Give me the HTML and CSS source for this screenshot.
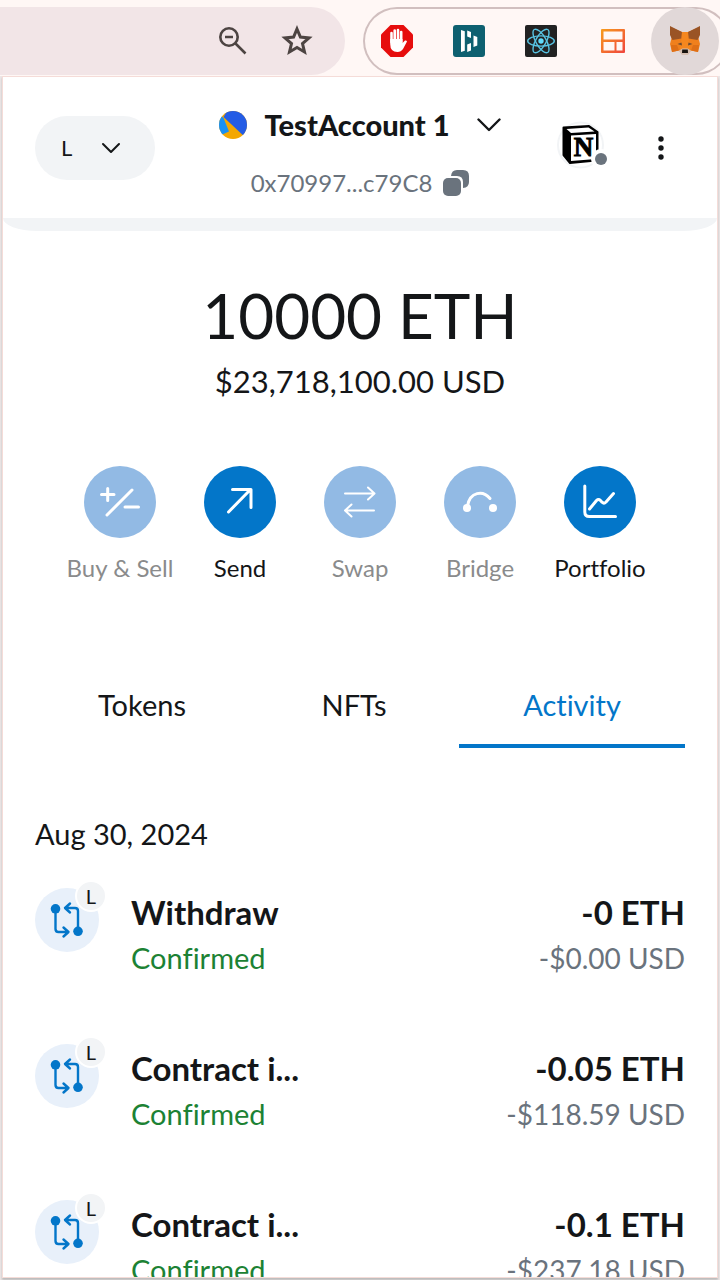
FILE: index.html
```html
<!DOCTYPE html>
<html lang="en">
<head>
<meta charset="utf-8">
<meta name="viewport" content="width=device-width, initial-scale=1">
<title>Wallet</title>
<link rel="stylesheet" href="styles.css">
</head>
<body>
<svg class="defs" aria-hidden="true">
  <symbol id="interaction" viewBox="0 0 64 64">
    <g fill="none" stroke="#0376c9" stroke-width="2.4" stroke-linecap="round" stroke-linejoin="round">
      <path d="M20.500 22V41Q20.500 44 23.500 44H33M28.500 39.500L33.500 44L28.500 48.500M43 42V23Q43 20 40 20H30.500M35 15.500L30 20L35 24.500"/>
    </g>
    <circle cx="20.500" cy="20.800" r="4.800" fill="#0376c9"/><circle cx="43" cy="43.300" r="4.800" fill="#0376c9"/>
  </symbol>
</svg>
<div class="toolbar">
  <div class="address-bar">
    <button class="bar-button" aria-label="Zoom">
      <svg width="32" height="32" viewBox="0 0 32 32" fill="none" stroke="#4d4442" stroke-width="2.600"><circle cx="12" cy="12" r="8.700"/><path d="M8 12H16M18.500 18.500L28.500 28.500"/></svg>
    </button>
    <button class="bar-button" aria-label="Bookmark">
      <svg width="32" height="32" viewBox="0 0 32 32" fill="none" stroke="#4d4442" stroke-width="3"><path d="M16 4L19.400 12.100L28 12.900L21.500 18.600L23.500 27L16 22.500L8.500 27L10.500 18.600L4 12.900L12.600 12.100Z"/></svg>
    </button>
  </div>
  <div class="extensions">
    <button class="extension" aria-label="Ad blocker">
      <svg width="32" height="32" viewBox="0 0 32 32"><path fill="#e60d0d" d="M9.500 0H22.500L32 9.500V22.500L22.500 32H9.500L0 22.500V9.500Z"/><g stroke="#fff" stroke-width="2.600" stroke-linecap="round"><path d="M10.500 17V8M13.700 15V5.500M17 15V5M20.200 17V7"/></g><path fill="#fff" d="M9.200 14H21.500V18L24 15.500Q25.500 15 26 16.500L22 24Q20 27 16.500 27Q9.200 27 9.200 19Z"/></svg>
    </button>
    <button class="extension" aria-label="Dashboard">
      <svg width="32" height="32" viewBox="0 0 32 32"><rect width="32" height="32" rx="3" fill="#0e6070"/><g fill="#fff"><path d="M8 5L11.800 6.200V25.800L8 27ZM14.200 5.500L18 7V13L14.200 11.500ZM14.200 19.500L18 18V25.500L14.200 27ZM20.500 10.500L24.300 12V20.500L20.500 22Z"/></g></svg>
    </button>
    <button class="extension" aria-label="React developer tools">
      <svg width="32" height="32" viewBox="0 0 32 32"><rect width="32" height="32" rx="2" fill="#222"/><circle cx="16" cy="16" r="2.700" fill="#61dafb"/><g fill="none" stroke="#58c4e3" stroke-width="1.400"><ellipse cx="16" cy="16" rx="13.300" ry="5.100"/><ellipse cx="16" cy="16" rx="13.300" ry="5.100" transform="rotate(60 16 16)"/><ellipse cx="16" cy="16" rx="13.300" ry="5.100" transform="rotate(120 16 16)"/></g></svg>
    </button>
    <button class="extension" aria-label="Layout">
      <svg width="24" height="24" viewBox="0 0 24 24"><defs><linearGradient id="warm" x1="0" y1="0" x2="1" y2="1"><stop stop-color="#f79c1c"/><stop offset="1" stop-color="#f0443e"/></linearGradient></defs><path fill="url(#warm)" fill-rule="evenodd" d="M1 0H23Q24 0 24 1V23Q24 24 23 24H1Q0 24 0 23V1Q0 0 1 0ZM2.500 2.500V10.500H21.500V2.500ZM2.500 13V21.500H13.500V13ZM15.500 13V21.500H21.500V13Z"/></svg>
    </button>
    <button class="extension extension-active" aria-label="Wallet extension">
      <svg width="32" height="32" viewBox="0 0 32 32"><path fill="#f0801d" d="M1 2L13 7H19L31 2L29.500 13L31 19L29 27L22 25.500L19 29H13L10 25.500L3 27L1 19L2.500 13Z"/><path fill="#9a5425" d="M1 1L13 7L12.500 13.500L3.500 15L1 10ZM31 1L19 7L19.500 13.500L28.500 15L31 10Z"/><path fill="#f5871f" d="M13 7H19L19.500 14L21 24H11L12.500 14Z"/><path fill="#6d4a31" d="M8.500 19L12.500 17.500L13 20.500ZM23.500 19L19.500 17.500L19 20.500Z"/><path fill="#d5bfb2" d="M10 25.500L13.500 23.500H18.500L22 25.500L19 30H13Z"/><path fill="#17130f" d="M13.200 24.500H18.800L19 28H13Z"/><path fill="#df6f16" d="M2 20H8L10 25.500L3 27ZM30 20H24L22 25.500L29 27Z"/></svg>
    </button>
  </div>
</div>
<main class="popup">
  <header class="header">
    <button class="network" aria-label="Network L"><span>L</span>
      <svg width="20" height="12" viewBox="0 0 20 12" fill="none" stroke="#141618" stroke-width="2" stroke-linecap="round" stroke-linejoin="round"><path d="M2 2L10 10L18 2"/></svg>
    </button>
    <div class="account">
      <button class="account-name">
        <svg width="28" height="28" viewBox="0 0 28 28"><defs><clipPath id="round"><circle cx="14" cy="14" r="14"/></clipPath></defs><g clip-path="url(#round)"><path fill="#f3a702" d="M0 0H28V28H0Z"/><path fill="#245ce5" d="M8 0H28V28L4.500 6Z"/><path fill="#1b91f2" d="M0 3L4.500 7L10 20.500L0 25Z"/></g></svg>
        <span>TestAccount 1</span>
        <svg width="24" height="16" viewBox="0 0 24 16" fill="none" stroke="#141618" stroke-width="2.400" stroke-linecap="round" stroke-linejoin="round"><path d="M1.500 2.500L12 13L22.500 2.500"/></svg>
      </button>
      <button class="account-address">
        <span>0x70997...c79C8</span>
        <svg width="26" height="26" viewBox="0 0 26 26" fill="#6a737d"><rect x="0" y="8" width="18" height="18" rx="5"/><path d="M8 6Q8.500 0 14 0H20Q26 0 26 6V12Q26 17.500 20 18V12Q20 6 14 6Z"/></svg>
      </button>
    </div>
    <div class="header-actions">
      <button class="site" aria-label="Connected site">
        <svg width="48" height="48" viewBox="0 0 48 48"><circle cx="23.500" cy="24" r="22.500" fill="#fff" stroke="#f2f4f6" stroke-width="2"/><path fill="#000" stroke="#000" stroke-width="2" stroke-linejoin="round" d="M6.500 6.500L32 5L40.500 11V37L39 39.500L13 42L6.500 34Z"/><path fill="#fff" d="M9.500 8L31.500 6.500L37.500 10.500L14 12ZM14 14.500L39 13V38L14 40Z"/><text class="site-letter" x="26.500" y="35" text-anchor="middle">N</text><circle cx="44" cy="38" r="10" fill="#fff"/></svg>
        <span class="site-status"></span>
      </button>
      <button class="menu" aria-label="Menu">
        <svg width="8" height="26" viewBox="0 0 8 26" fill="#141618"><circle cx="4" cy="4" r="2.700"/><circle cx="4" cy="13" r="2.700"/><circle cx="4" cy="22" r="2.700"/></svg>
      </button>
    </div>
  </header>
  <div class="band"></div>
  <section class="overview">
    <h1 class="balance">10000 ETH</h1>
    <p class="fiat">$23,718,100.00 USD</p>
    <div class="actions">
      <button class="action" disabled><span class="action-icon"><svg width="40" height="40" viewBox="0 0 40 40"><path d="M1.500 12.500H14M7.700 6.500V18.500M7 33L32 8M25 25H38.500"/></svg></span>Buy &amp; Sell</button>
      <button class="action"><span class="action-icon"><svg width="40" height="40" viewBox="0 0 40 40"><path d="M8.500 30L30 8M12.500 7.500H31V25.500"/></svg></span>Send</button>
      <button class="action" disabled><span class="action-icon"><svg class="thin" width="40" height="40" viewBox="0 0 40 40"><path d="M5 11.500H34M28 5.500L34.500 11.500L28 17.500M34 28.500H5M11.500 22.500L5 28.500L11.500 34.500"/></svg></span>Swap</button>
      <button class="action" disabled><span class="action-icon"><svg width="40" height="40" viewBox="0 0 40 40"><path d="M7.500 24C10 9.500 23 8 30 16.500"/><circle cx="7" cy="26" r="4"/><circle cx="33" cy="26" r="4"/></svg></span>Bridge</button>
      <button class="action"><span class="action-icon"><svg width="40" height="40" viewBox="0 0 40 40"><path d="M4.800 4V30Q4.800 34.500 9.300 34.500H35.500M9.500 27L16.500 18.500Q18.500 16.500 20.500 18.500L22 20.200Q24 22 26 20L33.500 11.500"/></svg></span>Portfolio</button>
    </div>
  </section>
  <div class="tabs" role="tablist">
    <button class="tab" role="tab" aria-selected="false">Tokens</button>
    <button class="tab" role="tab" aria-selected="false">NFTs</button>
    <button class="tab tab-active" role="tab" aria-selected="true">Activity</button>
  </div>
  <section class="activity">
    <h2 class="date">Aug 30, 2024</h2>
    <ul class="list">
      <li class="row"><div class="tx-icon"><svg width="64" height="64"><use href="#interaction"/></svg><span class="badge">L</span></div><div class="detail"><h3 class="title">Withdraw</h3><p class="status">Confirmed</p></div><div class="amount"><p class="title">-0 ETH</p><p class="value">-$0.00 USD</p></div></li>
      <li class="row"><div class="tx-icon"><svg width="64" height="64"><use href="#interaction"/></svg><span class="badge">L</span></div><div class="detail"><h3 class="title">Contract i...</h3><p class="status">Confirmed</p></div><div class="amount"><p class="title">-0.05 ETH</p><p class="value">-$118.59 USD</p></div></li>
      <li class="row"><div class="tx-icon"><svg width="64" height="64"><use href="#interaction"/></svg><span class="badge">L</span></div><div class="detail"><h3 class="title">Contract i...</h3><p class="status">Confirmed</p></div><div class="amount"><p class="title">-0.1 ETH</p><p class="value">-$237.18 USD</p></div></li>
    </ul>
  </section>
</main>
</body>
</html>
```

FILE: styles.css
```css
* { box-sizing: border-box; }
body {
  margin: 0;
  height: 100vh;
  overflow: hidden;
  display: flex;
  flex-direction: column;
  background: #ece6e6;
  color: #141618;
  font-family: Lato, "Liberation Sans", sans-serif;
  font-variant-ligatures: none;
}
button {
  border: 0;
  padding: 0;
  background: none;
  color: inherit;
  font: inherit;
  font-variant-ligatures: none;
}
h1, h2, h3, p, ul { margin: 0; padding: 0; }
svg { display: block; flex: none; }
.defs { position: absolute; width: 0; height: 0; }

.toolbar {
  flex: none;
  display: flex;
  gap: 18px;
  padding: 7px 0 1px;
  background: #fff7f5;
}
.address-bar {
  flex: 1;
  display: flex;
  align-items: center;
  justify-content: flex-end;
  gap: 32px;
  padding-right: 32px;
  border-radius: 0 34px 34px 0;
  background: #f2e5e7;
}
.extensions {
  flex: none;
  display: flex;
  gap: 4px;
  margin-right: -10px;
  padding-right: 11px;
  border-radius: 34px;
  box-shadow: inset 0 0 0 2px #d1bfbf;
}
.extension {
  width: 68px;
  height: 68px;
  display: flex;
  align-items: center;
  justify-content: center;
}
.extension-active {
  border-radius: 50%;
  background: #e1d8d8;
}

.popup {
  flex: 1;
  min-height: 0;
  overflow: hidden;
  margin: 0 2px 2px;
  border: 1px solid #f5dcd8;
  background: #fff;
  box-shadow: 0 2px 2px #bbb;
}
.header {
  display: grid;
  grid-template-columns: 1fr auto 1fr;
  align-items: center;
  height: 141px;
  padding: 0 32px;
}
.network {
  display: flex;
  align-items: center;
  justify-content: space-between;
  width: 120px;
  height: 64px;
  padding: 0 34px 0 26px;
  border-radius: 32px;
  background: #f2f4f6;
  font-size: 22px;
}
.account {
  display: flex;
  flex-direction: column;
  align-items: center;
  gap: 6px;
}
.account-name {
  display: flex;
  align-items: center;
  gap: 18px;
  height: 64px;
  font-size: 29px;
  font-weight: 900;
}
.account-name span { margin-right: 10px; }
.account-address {
  display: flex;
  align-items: center;
  gap: 11px;
  height: 40px;
  color: #6a737d;
  font-size: 24px;
}
.header-actions {
  display: flex;
  align-items: center;
  justify-content: flex-end;
  gap: 32px;
}
.site {
  position: relative;
  padding-bottom: 6px;
}
.site-letter {
  font-family: "Liberation Serif", serif;
  font-size: 27px;
  font-weight: 700;
  stroke: #000;
}
.site-status {
  position: absolute;
  right: -2px;
  top: 32px;
  width: 12px;
  height: 12px;
  border-radius: 50%;
  background: #6a737d;
}
.menu {
  display: flex;
  align-items: center;
  justify-content: center;
  width: 48px;
  height: 48px;
}
.band {
  height: 13px;
  border-radius: 0 0 34px 34px / 0 0 13px 13px;
  background: #f2f4f6;
}

.overview {
  padding: 42px 56px 0;
  text-align: center;
}
.balance {
  font-size: 62px;
  font-weight: 400;
  line-height: 84px;
}
.fiat {
  font-size: 31px;
  line-height: 48px;
}
.actions {
  display: grid;
  grid-template-columns: repeat(5, 120px);
  justify-content: center;
  margin-top: 61px;
}
.action {
  display: flex;
  flex-direction: column;
  align-items: center;
  gap: 12px;
  font-size: 24px;
  line-height: 36px;
  white-space: nowrap;
}
.action-icon {
  display: flex;
  align-items: center;
  justify-content: center;
  width: 72px;
  height: 72px;
  border-radius: 50%;
  background: #0376c9;
}
.action-icon path {
  fill: none;
  stroke: #fff;
  stroke-width: 3;
  stroke-linecap: round;
  stroke-linejoin: round;
}
.action-icon .thin path { stroke-width: 2; }
.action-icon circle { fill: #fff; }
.action:disabled { color: #8a8b8c; }
.action:disabled .action-icon { background: #92bae4; }

.tabs {
  display: grid;
  grid-template-columns: 214fr 210fr 226fr;
  margin: 78px 32px 0;
}
.tab {
  height: 84px;
  border-bottom: 4px solid transparent;
  font-size: 29px;
}
.tab-active {
  border-color: #0376c9;
  color: #0376c9;
}

.activity { padding: 64px 32px 0; }
.date {
  font-size: 29px;
  font-weight: 400;
  line-height: 44px;
}
.list { list-style: none; }
.row {
  display: flex;
  gap: 32px;
  padding: 32px 0;
}
.tx-icon {
  position: relative;
  flex: none;
  width: 64px;
  height: 64px;
  border-radius: 50%;
  background: #e8f0fa;
}
.badge {
  position: absolute;
  top: -8px;
  right: -8px;
  width: 32px;
  height: 32px;
  border: 2px solid #fff;
  border-radius: 50%;
  background: #f2f4f6;
  font-size: 20px;
  line-height: 28px;
  text-align: center;
}
.detail { flex: 1; }
.amount { text-align: right; }
.title {
  font-size: 33px;
  font-weight: 700;
  line-height: 48px;
}
.status, .value {
  font-size: 29px;
  line-height: 44px;
}
.status { color: #1c8234; }
.value {
  color: #6a737d;
  font-size: 28px;
}
```
